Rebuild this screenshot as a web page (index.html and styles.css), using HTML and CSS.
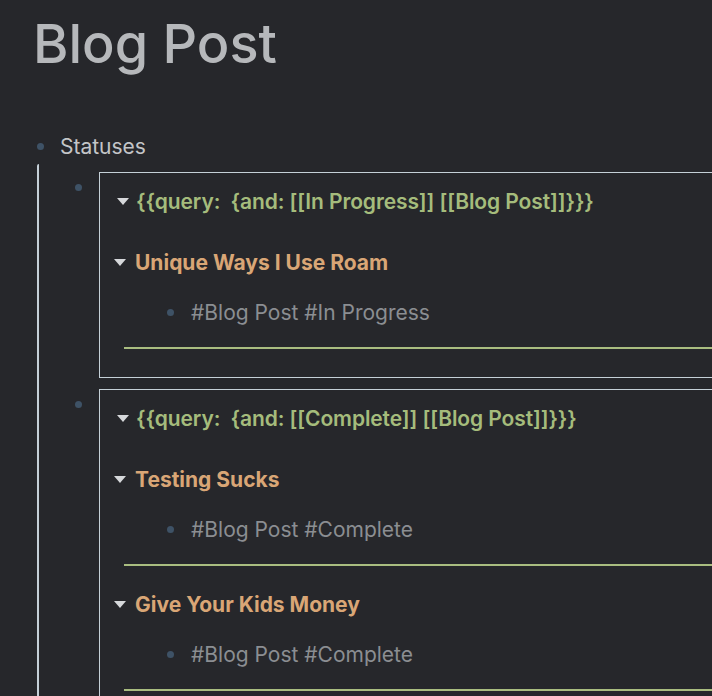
FILE: index.html
```html
<!DOCTYPE html>
<html>
<head>
<meta charset="utf-8">
<link rel="stylesheet" href="styles.css">
</head>
<body>
<div class="page">
  <h1 class="title">Blog Post</h1>
  <div class="block">
    <div class="row top-row">
      <span class="bullet"></span>
      <span class="top-text">Statuses</span>
    </div>
    <div class="children">
      <div class="child">
        <span class="bullet child-bullet"></span>
        <div class="box">
          <div class="q-row"><span class="tri"></span><span class="query">{{query:&nbsp; {and: [[In Progress]] [[Blog Post]]}}}</span></div>
          <div class="result">
            <div class="r-title"><span class="tri tri-r"></span><span class="r-text">Unique Ways I Use Roam</span></div>
            <div class="r-child"><span class="bullet"></span><span class="tags">#Blog Post #In Progress</span></div>
            <div class="r-line"></div>
          </div>
        </div>
      </div>
      <div class="child">
        <span class="bullet child-bullet"></span>
        <div class="box">
          <div class="q-row"><span class="tri"></span><span class="query">{{query:&nbsp; {and: [[Complete]] [[Blog Post]]}}}</span></div>
          <div class="result">
            <div class="r-title"><span class="tri tri-r"></span><span class="r-text">Testing Sucks</span></div>
            <div class="r-child"><span class="bullet"></span><span class="tags">#Blog Post #Complete</span></div>
            <div class="r-line"></div>
          </div>
          <div class="result">
            <div class="r-title"><span class="tri tri-r"></span><span class="r-text">Give Your Kids Money</span></div>
            <div class="r-child"><span class="bullet"></span><span class="tags">#Blog Post #Complete</span></div>
            <div class="r-line"></div>
          </div>
        </div>
      </div>
    </div>
  </div>
</div>
</body>
</html>
```

FILE: styles.css
```css
html, body {
  margin: 0;
  padding: 0;
  background: #26272b;
  overflow: hidden;
  height: 100%;
}
body {
  font-family: Inter, "Noto Sans", sans-serif;
}
.page {
  width: 820px;
}
.title {
  margin: 11px 0 0 33px;
  font-size: 54px;
  line-height: 65px;
  font-weight: 500;
  color: #b6b8bb;
}
.block {
  margin-top: 52px;
}
.row {
  display: flex;
  align-items: center;
}
.top-row {
  height: 36px;
  padding-left: 37px;
}
.bullet {
  width: 7px;
  height: 7px;
  border-radius: 50%;
  background: #3e5266;
  flex: none;
}
.top-text {
  margin-left: 16px;
  font-size: 21px;
  color: #c3c5c8;
}
.children {
  margin-left: 37px;
  border-left: 2px solid #c5d0d8;
  border-top-left-radius: 2px;
  padding-top: 8px;
  padding-bottom: 40px;
}
.child {
  display: flex;
  align-items: flex-start;
  margin-bottom: 11px;
}
.child-bullet {
  margin: 12px 17px 0 36px;
}
.box {
  flex: 1;
  border: 1px solid #c5d0d8;
  padding: 10px 0 28px 17px;
}
.q-row {
  height: 36px;
  display: flex;
  align-items: center;
}
.tri {
  width: 0;
  height: 0;
  border-left: 6px solid transparent;
  border-right: 6px solid transparent;
  border-top: 7px solid #d6d8db;
  margin-right: 7px;
  flex: none;
}
.query {
  font-size: 21px;
  font-weight: 600;
  color: #a5bc7c;
  white-space: nowrap;
  letter-spacing: -0.1px;
}
.result {
  margin-top: 25px;
  margin-left: 7px;
}
.result + .result {
  margin-top: 20px;
}
.r-title {
  height: 36px;
  display: flex;
  align-items: center;
}
.tri-r {
  margin-left: -10px;
  margin-right: 9px;
}
.r-text {
  font-size: 21px;
  font-weight: 700;
  color: #d9a676;
}
.r-child {
  height: 36px;
  margin-top: 14px;
  display: flex;
  align-items: center;
  padding-left: 43px;
}
.tags {
  margin-left: 17px;
  font-size: 21px;
  color: #8b8e92;
}
.r-line {
  margin-top: 17px;
  height: 2px;
  background: #a9bd80;
}
```
